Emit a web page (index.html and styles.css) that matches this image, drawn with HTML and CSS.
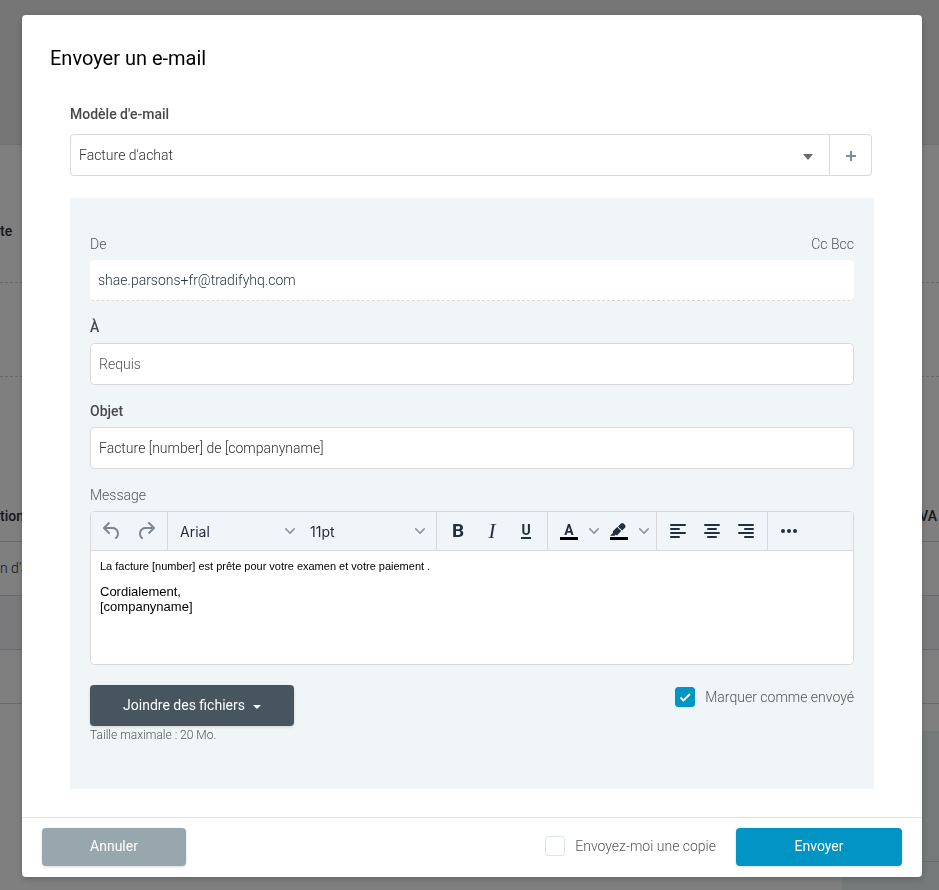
FILE: index.html
```html
<!DOCTYPE html>
<html lang="fr">
<head>
  <meta charset="UTF-8">
  <meta name="viewport" content="width=device-width, initial-scale=1.0">
  <title>Envoyer un e-mail</title>
  <link rel="stylesheet" href="styles.css">
</head>
<body>
  <!-- page behind the dialog -->
  <main class="page">
    <div class="page-header"></div>
    <div class="page-row page-row-first page-label">te</div>
    <div class="page-row page-row-empty"></div>
    <div class="page-table">
      <div class="page-line page-head"><span>tion</span><span>TVA</span></div>
      <div class="page-line page-item">n d'achat</div>
      <div class="page-line page-total"></div>
      <div class="page-line"></div>
    </div>
    <div class="page-summary"><div class="page-summary-row"></div></div>
  </main>

  <div class="overlay">
    <form class="modal" role="dialog" aria-labelledby="modalTitle">
      <h1 class="modal-title" id="modalTitle">Envoyer un e-mail</h1>

      <div class="modal-body">
        <label class="label label-strong label-template" for="template">Modèle d'e-mail</label>
        <div class="template-group">
          <div class="select-wrap template-select">
            <select id="template">
              <option>Facture d'achat</option>
            </select>
            <svg class="caret" width="10" height="6" viewBox="0 0 10 6"><path d="M0 0h10L5 6z"/></svg>
          </div>
          <button type="button" class="template-add" aria-label="Ajouter un modèle">
            <svg width="12" height="12" viewBox="0 0 12 12"><path d="M5 1h2v4h4v2H7v4H5V7H1V5h4z"/></svg>
          </button>
        </div>

        <div class="panel">
          <div class="label-row">
            <label class="label" for="from">De</label>
            <span class="copy-links"><a href="#">Cc</a> <a href="#">Bcc</a></span>
          </div>
          <input class="field field-from" id="from" type="text" value="shae.parsons+fr@tradifyhq.com" readonly>

          <label class="label label-strong" for="to">À</label>
          <input class="field" id="to" type="text" placeholder="Requis">

          <label class="label label-strong" for="subject">Objet</label>
          <input class="field" id="subject" type="text" value="Facture [number] de [companyname]">

          <span class="label" id="messageLabel">Message</span>
          <div class="editor">
            <div class="toolbar">
              <div class="tool-group tool-history">
                <button type="button" class="tool" aria-label="Annuler la saisie">
                  <svg width="24" height="24" viewBox="0 0 24 24"><path d="M6.4 8H12c3.7 0 6.2 2 6.8 5.1.6 2.7-.4 5.6-2.3 6.8a1 1 0 0 1-1-1.8c1.1-.6 1.8-2.7 1.4-4.6-.5-2.1-2.1-3.5-4.9-3.5H6.4l3.3 3.3a1 1 0 1 1-1.4 1.4l-5-5a1 1 0 0 1 0-1.4l5-5a1 1 0 0 1 1.4 1.4L6.4 8z"/></svg>
                </button>
                <button type="button" class="tool" aria-label="Rétablir">
                  <svg width="24" height="24" viewBox="0 0 24 24"><path d="M17.6 10H12c-2.8 0-4.4 1.4-4.9 3.5-.4 2 .3 4 1.4 4.6a1 1 0 1 1-1 1.8c-2-1.2-2.9-4.1-2.3-6.8.6-3 3-5.1 6.8-5.1h5.6l-3.3-3.3a1 1 0 1 1 1.4-1.4l5 5a1 1 0 0 1 0 1.4l-5 5a1 1 0 0 1-1.4-1.4l3.3-3.3z"/></svg>
                </button>
              </div>
              <div class="tool-group">
                <div class="select-wrap tool-select">
                  <select aria-label="Police"><option>Arial</option></select>
                  <svg class="chevron" width="10" height="10" viewBox="0 0 10 10"><path d="M8.7 2.2c.3-.3.8-.3 1 0 .4.4.4.9 0 1.2L5.7 7.8c-.3.3-.9.3-1.2 0L.2 3.4a.8.8 0 0 1 0-1.2c.3-.3.8-.3 1.1 0L5 6l3.7-3.8z"/></svg>
                </div>
                <div class="select-wrap tool-select">
                  <select aria-label="Taille"><option>11pt</option></select>
                  <svg class="chevron" width="10" height="10" viewBox="0 0 10 10"><path d="M8.7 2.2c.3-.3.8-.3 1 0 .4.4.4.9 0 1.2L5.7 7.8c-.3.3-.9.3-1.2 0L.2 3.4a.8.8 0 0 1 0-1.2c.3-.3.8-.3 1.1 0L5 6l3.7-3.8z"/></svg>
                </div>
              </div>
              <div class="tool-group">
                <button type="button" class="tool tool-bold" aria-label="Gras">B</button>
                <button type="button" class="tool tool-italic" aria-label="Italique">I</button>
                <button type="button" class="tool" aria-label="Souligné"><span class="tool-underline">U</span></button>
              </div>
              <div class="tool-group">
                <button type="button" class="tool" aria-label="Couleur du texte"><span class="tool-color">A</span></button>
                <button type="button" class="tool tool-narrow" aria-label="Choisir la couleur du texte">
                  <svg class="chevron" width="10" height="10" viewBox="0 0 10 10"><path d="M8.7 2.2c.3-.3.8-.3 1 0 .4.4.4.9 0 1.2L5.7 7.8c-.3.3-.9.3-1.2 0L.2 3.4a.8.8 0 0 1 0-1.2c.3-.3.8-.3 1.1 0L5 6l3.7-3.8z"/></svg>
                </button>
                <button type="button" class="tool" aria-label="Surlignage">
                  <svg width="24" height="24" viewBox="0 0 24 24"><path fill="#000" d="M3 18h18v3H3z"/><path d="M7.7 16.7H3l3.3-3.3-.7-.8L10.2 8l4 4.1-4 4.2c-.2.2-.6.2-.8 0l-.6-.7-1.1 1.1zm5-7.5L11 7.4l3-2.9a2 2 0 0 1 2.6 0L18 6c.7.7.7 2 0 2.7l-2.9 2.9-1.8-1.8-.5-.6"/></svg>
                </button>
                <button type="button" class="tool tool-narrow" aria-label="Choisir le surlignage">
                  <svg class="chevron" width="10" height="10" viewBox="0 0 10 10"><path d="M8.7 2.2c.3-.3.8-.3 1 0 .4.4.4.9 0 1.2L5.7 7.8c-.3.3-.9.3-1.2 0L.2 3.4a.8.8 0 0 1 0-1.2c.3-.3.8-.3 1.1 0L5 6l3.7-3.8z"/></svg>
                </button>
              </div>
              <div class="tool-group">
                <button type="button" class="tool" aria-label="Aligner à gauche">
                  <svg class="lines" width="24" height="24" viewBox="0 0 24 24"><path d="M5 6h14M5 10h8M5 14h14M5 18h8"/></svg>
                </button>
                <button type="button" class="tool" aria-label="Centrer">
                  <svg class="lines" width="24" height="24" viewBox="0 0 24 24"><path d="M5 6h14M8 10h8M5 14h14M8 18h8"/></svg>
                </button>
                <button type="button" class="tool" aria-label="Aligner à droite">
                  <svg class="lines" width="24" height="24" viewBox="0 0 24 24"><path d="M5 6h14M11 10h8M5 14h14M11 18h8"/></svg>
                </button>
              </div>
              <div class="tool-group">
                <button type="button" class="tool" aria-label="Plus">
                  <svg width="24" height="24" viewBox="0 0 24 24"><circle cx="6" cy="12" r="2"/><circle cx="12" cy="12" r="2"/><circle cx="18" cy="12" r="2"/></svg>
                </button>
              </div>
            </div>
            <div class="message" contenteditable="true" role="textbox" aria-multiline="true" aria-labelledby="messageLabel">
              <p class="message-small">La facture [number] est prête pour votre examen et votre paiement .</p>
              <p>Cordialement,<br>[companyname]</p>
            </div>
          </div>

          <div class="attach-row">
            <div>
              <button type="button" class="btn btn-attach">Joindre des fichiers
                <svg width="8" height="4" viewBox="0 0 8 4"><path d="M0 0h8L4 4z"/></svg>
              </button>
              <small class="hint">Taille maximale : 20 Mo.</small>
            </div>
            <label class="check"><input type="checkbox" checked>Marquer comme envoyé</label>
          </div>
        </div>
      </div>

      <div class="modal-footer">
        <button type="button" class="btn btn-cancel">Annuler</button>
        <label class="check"><input type="checkbox">Envoyez-moi une copie</label>
        <button type="submit" class="btn btn-send">Envoyer</button>
      </div>
    </form>
  </div>
</body>
</html>
```

FILE: styles.css
```css
* {
  box-sizing: border-box;
}
body {
  margin: 0;
  font-family: Roboto, "Liberation Sans", sans-serif;
  font-size: 14px;
  font-weight: 300;
  line-height: 20px;
  color: #303030;
}
button, input, select {
  font: inherit;
  color: inherit;
}
a {
  color: inherit;
  text-decoration: none;
}

/* page behind the dialog */
.page {
  height: 100vh;
  overflow: hidden;
  background: #fff;
}
.page-header {
  height: 145px;
  background: #ececec;
  border-bottom: 1px solid #dcdde6;
}
.page-row {
  height: 94px;
  border-bottom: 1px dashed #d0d0d0;
}
.page-row-first {
  height: 138px;
  padding-top: 76px;
}
.page-label, .page-head {
  font-weight: 500;
}
.page-table {
  padding-top: 113px;
}
.page-line {
  height: 54px;
  padding-top: 16px;
  border-bottom: 1px solid #d3d5de;
}
.page-head {
  display: flex;
  justify-content: space-between;
  height: 52px;
  padding-right: 2px;
}
.page-total {
  background: #f4f5fb;
}
.page-summary {
  height: 200px;
  margin: 27px 0 0 842px;
  background: #edf3f4;
}
.page-summary-row {
  height: 131px;
  border-bottom: 1px solid #d3d5de;
}

/* dialog */
.overlay {
  position: fixed;
  inset: 0;
  padding: 15px 17px 13px 22px;
  background: rgba(0, 0, 0, 0.5);
  overflow: auto;
}
.modal {
  background: #fff;
  border-radius: 4px;
  box-shadow: 0 2px 6px rgba(0, 0, 0, 0.2);
}
.modal-title {
  margin: 0;
  padding: 29px 28px 0;
  font-size: 20px;
  font-weight: 400;
  line-height: 28px;
  color: #000;
}
.modal-body {
  padding: 32px 48px 28px;
}
.label {
  display: block;
  margin: 16px 0 6px;
  color: #555;
}
.label-strong {
  font-weight: 500;
  color: #484848;
}
.label-template {
  margin: 0 0 10px;
}

.template-group {
  display: flex;
  height: 42px;
  margin-right: 2px;
  border: 1px solid #d9d9d9;
  border-radius: 4px;
}
.select-wrap {
  display: grid;
  align-items: center;
}
.select-wrap select {
  grid-area: 1 / 1;
  width: 100%;
  height: 100%;
  padding: 0 8px;
  border: 0;
  background: none;
  appearance: none;
}
.select-wrap svg {
  grid-area: 1 / 1;
  justify-self: end;
  pointer-events: none;
}
.template-select {
  flex: 1;
}
.caret {
  margin: 4px 16px 0 0;
  fill: #6b6b6b;
}
.template-add {
  display: flex;
  align-items: center;
  justify-content: center;
  width: 42px;
  padding: 2px 0 0;
  border: 0;
  border-left: 1px solid #d9d9d9;
  background: none;
  fill: #78909c;
}

.panel {
  margin-top: 22px;
  padding: 36px 20px 45px;
  background: #f0f5f8;
}
.label-row {
  display: flex;
  justify-content: space-between;
  margin-bottom: 6px;
  color: #555;
}
.label-row .label {
  margin: 0;
}
.field {
  display: block;
  width: 100%;
  height: 42px;
  padding: 0 8px;
  border: 1px solid #d9d9d9;
  border-radius: 4px;
  background: #fff;
}
.field::placeholder {
  color: #555;
  opacity: 1;
}
.field-from {
  height: 41px;
  border-width: 0 0 1px;
  border-bottom-style: dashed;
  color: #263640;
}

/* message editor */
.editor {
  border: 1px solid #d9d9d9;
  border-radius: 4px;
  background: #fff;
  overflow: hidden;
}
.toolbar {
  display: flex;
  height: 39px;
  background: #f0f5fa;
  border-bottom: 1px solid #d9d9d9;
}
.tool-group {
  display: flex;
  padding: 0 4px;
  border-right: 1px solid #d9d9d9;
}
.tool-group:last-child {
  border-right: 0;
}
.tool-history .tool {
  fill: #7c8791;
}
.tool {
  display: flex;
  align-items: center;
  justify-content: center;
  width: 34px;
  padding: 0;
  border: 0;
  background: none;
  color: #222f3e;
  fill: #222f3e;
}
.tool-narrow {
  width: 16px;
}
.chevron {
  fill: #8b97a2;
}
.tool-select {
  width: 130px;
  font-family: Inter, Roboto, sans-serif;
  font-weight: 400;
  color: #222f3e;
}
.tool-select select {
  padding-top: 2px;
}
.tool-select .chevron {
  margin-right: 7px;
}
.tool-history {
  min-width: 77px;
  justify-content: center;
}
.tool-bold {
  font-size: 19px;
  font-weight: 700;
}
.tool-italic {
  font-family: "Liberation Serif", serif;
  font-size: 21px;
  font-style: italic;
}
.tool-underline {
  width: 10px;
  border-bottom: 2px solid #222f3e;
  font-weight: 700;
  line-height: 13px;
}
.tool-color {
  width: 18px;
  border-bottom: 3px solid #000;
  font-weight: 700;
  line-height: 14px;
}
.lines {
  fill: none;
  stroke: #222f3e;
  stroke-width: 2;
  stroke-linecap: round;
}
.message {
  min-height: 113px;
  padding: 8px 9px;
  font-family: "Liberation Sans", Arial, sans-serif;
  font-size: 13px;
  font-weight: 400;
  line-height: 15px;
  color: #000;
  outline: none;
}
.message p {
  margin: 0 0 10px;
}
.message .message-small {
  font-size: 11px;
}

.attach-row {
  display: flex;
  justify-content: space-between;
  align-items: flex-start;
  margin-top: 20px;
}
.btn {
  height: 38px;
  padding: 0 32px 2px;
  border: 0;
  border-radius: 4px;
  box-shadow: 0 1px 3px rgba(0, 0, 0, 0.15);
  color: #fff;
  font-weight: 400;
}
.btn-attach {
  display: flex;
  align-items: center;
  justify-content: center;
  gap: 8px;
  min-width: 204px;
  height: 41px;
  background: #47555e;
  fill: #fff;
}
.btn-attach svg {
  margin-top: 4px;
}
.hint {
  display: block;
  font-size: 12px;
  line-height: 18px;
  color: #555;
}
.check {
  display: flex;
  align-items: center;
  gap: 10px;
  color: #555;
}
.attach-row .check {
  margin-top: 2px;
}
.check input {
  width: 20px;
  height: 20px;
  margin: 0;
  border: 1px solid #dce5e8;
  border-radius: 3px;
  background: #fff;
  appearance: none;
}
.check input:checked {
  border-color: #0095c4;
  background: #0095c4 url("data:image/svg+xml,%3Csvg xmlns='http://www.w3.org/2000/svg' viewBox='0 0 18 18'%3E%3Cpath d='M4.5 9.5l3 3 6.500-6.500' fill='none' stroke='white' stroke-width='1.800'/%3E%3C/svg%3E") center / 18px no-repeat;
}

.modal-footer {
  display: flex;
  align-items: center;
  gap: 20px;
  padding: 10px 20px 11px;
  border-top: 1px solid #dce5e8;
}
.modal-footer .check {
  padding-bottom: 2px;
}
.btn-cancel {
  min-width: 144px;
  margin-right: auto;
  background: #98a6ad;
}
.btn-send {
  min-width: 166px;
  background: #0095c4;
}
```
